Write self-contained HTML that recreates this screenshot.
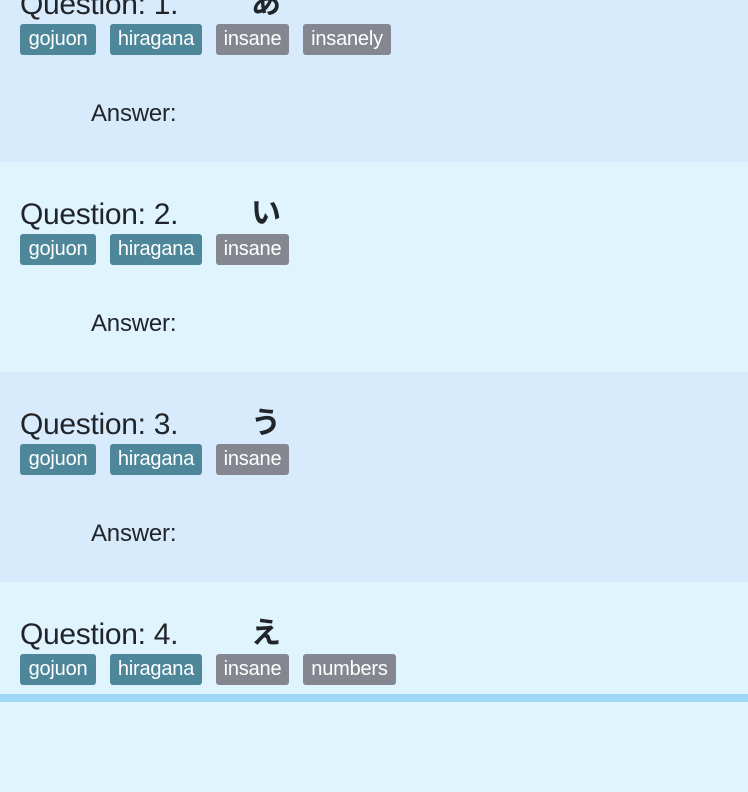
<!DOCTYPE html>
<html><head><style>
html,body{margin:0;padding:0;width:748px;height:702px;overflow:hidden;font-family:"Liberation Sans","Noto Sans CJK JP",sans-serif;background:#e0f4fe}
.row{position:absolute;left:0;width:748px;height:210px;}
.a{background:#d8ebfc}.b{background:#e0f4fe}
.q{position:absolute;left:20px;top:36px;font-size:30px;color:#212529;letter-spacing:-0.3px;line-height:34px;}
.k{position:absolute;left:251px;top:35px;font-size:30px;font-weight:bold;color:#212529;line-height:34px;}
.tags{position:absolute;left:20px;top:72px;height:31px;}
.t{position:absolute;top:0;height:31px;line-height:31px;border-radius:3px;color:#fff;font-size:20px;text-align:center;letter-spacing:-0.2px}
.g{background:#4e8799}.h{background:#84878f}
.ans{position:absolute;left:91px;top:148px;font-size:24px;color:#212529;letter-spacing:-0.2px;line-height:28px;}
.bar{position:absolute;left:0;top:694px;width:748px;height:8px;background:#9dd9f7}
</style></head><body>
<div class="row a" style="top:-48px">
<div class="q">Question: 1.</div><div class="k">あ</div>
<div class="tags"><div class="t g" style="left:0;width:76px">gojuon</div><div class="t g" style="left:90px;width:92px">hiragana</div><div class="t h" style="left:196px;width:73px">insane</div><div class="t h" style="left:283px;width:88px">insanely</div></div>
<div class="ans">Answer:</div></div>
<div class="row b" style="top:162px">
<div class="q">Question: 2.</div><div class="k">い</div>
<div class="tags"><div class="t g" style="left:0;width:76px">gojuon</div><div class="t g" style="left:90px;width:92px">hiragana</div><div class="t h" style="left:196px;width:73px">insane</div></div>
<div class="ans">Answer:</div></div>
<div class="row a" style="top:372px">
<div class="q">Question: 3.</div><div class="k">う</div>
<div class="tags"><div class="t g" style="left:0;width:76px">gojuon</div><div class="t g" style="left:90px;width:92px">hiragana</div><div class="t h" style="left:196px;width:73px">insane</div></div>
<div class="ans">Answer:</div></div>
<div class="row b" style="top:582px">
<div class="q">Question: 4.</div><div class="k">え</div>
<div class="tags"><div class="t g" style="left:0;width:76px">gojuon</div><div class="t g" style="left:90px;width:92px">hiragana</div><div class="t h" style="left:196px;width:73px">insane</div><div class="t h" style="left:283px;width:93px">numbers</div></div>
</div>
<div class="bar"></div>
</body></html>
